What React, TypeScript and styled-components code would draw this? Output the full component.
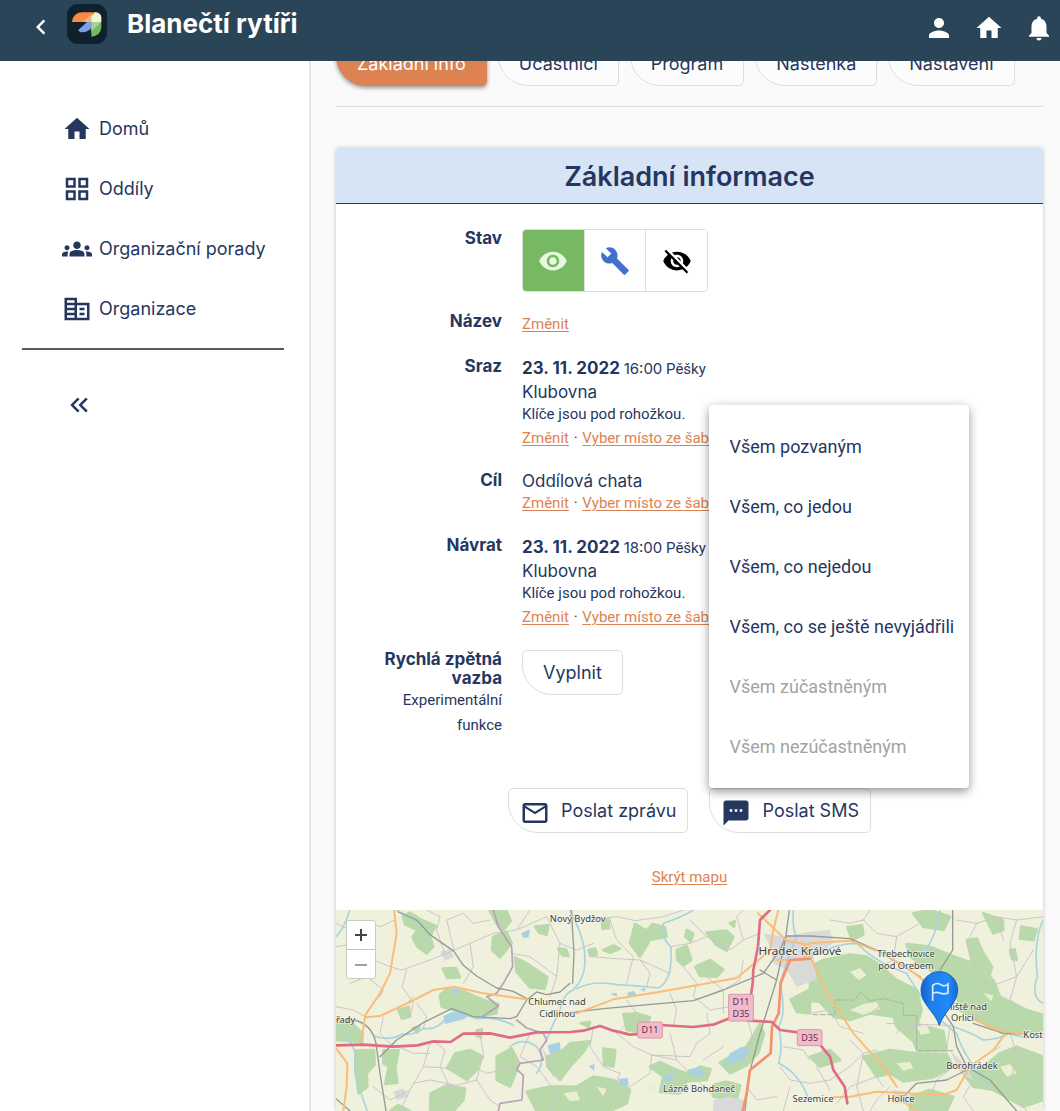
import React from "react";
import styled, { createGlobalStyle, css } from "styled-components";
import {
  MdBuild,
  MdChevronLeft,
  MdCorporateFare,
  MdGridView,
  MdGroups,
  MdHome,
  MdKeyboardDoubleArrowLeft,
  MdMailOutline,
  MdNotifications,
  MdPerson,
  MdSms,
  MdVisibility,
  MdVisibilityOff,
} from "react-icons/md";

const ink = "#26375f";
const orange = "#dd8251";
const line = "#dedede";
const display = `Inter, "Liberation Sans", sans-serif`;
const body = `Roboto, "Liberation Sans", sans-serif`;

const GlobalStyle = createGlobalStyle`
  * { box-sizing: border-box; }
  body { margin: 0; background: #fafafa; color: ${ink}; font-family: ${body}; font-size: 15px; }
  button { font: inherit; color: inherit; cursor: pointer; }
`;

/* ---------- Shell ---------- */

const Shell = styled.div`
  display: grid;
  grid-template-columns: 311px minmax(0, 1fr);
  min-height: 100vh;
`;

const AppBar = styled.header`
  position: fixed;
  inset: 0 0 auto 0;
  z-index: 10;
  display: flex;
  justify-content: space-between;
  align-items: flex-start;
  height: 61px;
  padding: 0 6px 0 26px;
  background: #294557;
  color: #fff;
`;

const Brand = styled.div`
  display: flex;
  align-items: center;
  height: 48px;
`;

const AppTitle = styled.h1`
  margin: 0 0 0 20px;
  font: 700 26px/32px ${display};
`;

const BarActions = styled.div`
  display: flex;
  align-items: center;
  gap: 20px;
  height: 56px;
`;

const IconButton = styled.button`
  display: flex;
  padding: 0;
  border: 0;
  background: none;
`;

const BackButton = styled(IconButton)`
  margin-right: 11px;
  padding-top: 6px;
`;

const Sidebar = styled.aside`
  padding: 99px 25px 0 22px;
  background: #fff;
  border-right: 2px solid #e6e6e6;
`;

const NavList = styled.nav`
  display: flex;
  flex-direction: column;
  padding-bottom: 9px;
  border-bottom: 2px solid #5b5b5b;
`;

const NavLink = styled.a`
  display: flex;
  align-items: center;
  gap: 7px;
  height: 60px;
  padding-left: 40px;
  color: ${ink};
  font: 400 18px/24px ${display};
  text-decoration: none;
`;

const CollapseButton = styled(IconButton)`
  margin: 40px 0 0 42px;
`;

const Main = styled.main`
  display: flex;
  flex-direction: column;
  padding: 41px 17px 0 25px;
`;

/* ---------- Tabs and buttons ---------- */

const leaf = css`
  display: inline-flex;
  align-items: center;
  justify-content: center;
  height: 45px;
  border: 1px solid ${line};
  border-radius: 5px 5px 5px 30px;
  background: #fff;
  font: 400 18px/24px ${display};
  white-space: nowrap;
`;

const Tabs = styled.nav`
  display: flex;
  gap: 11px;
  padding-bottom: 20px;
  border-bottom: 1px solid ${line};
`;

const Tab = styled.button<{ $active?: boolean }>`
  ${leaf}
  padding: 0 20px;
  background: #fcfcfc;
  ${(p) =>
    p.$active &&
    css`
      border-color: ${orange};
      background: ${orange};
      color: #fff;
      box-shadow: 0 2px 4px rgba(0, 0, 0, 0.4);
    `}
`;

const LeafButton = styled.button`
  ${leaf}
  padding: 0 20px;
`;

const ActionButton = styled.button`
  ${leaf}
  gap: 11px;
  padding: 0 11px;

  svg {
    margin-top: 5px;
  }
`;

/* ---------- Card ---------- */

const Card = styled.section`
  display: flex;
  flex: 1;
  flex-direction: column;
  margin-top: 41px;
  border-radius: 3px 3px 0 0;
  background: #fff;
  box-shadow: 0 0 4px rgba(0, 0, 0, 0.22);
`;

const CardTitle = styled.h2`
  margin: 0;
  padding: 12px 0 9px;
  border-bottom: 1px solid ${ink};
  border-radius: 3px 3px 0 0;
  background: #d7e4f6;
  font: 600 27px/34px ${display};
  text-align: center;
`;

const Details = styled.dl`
  display: grid;
  gap: 20px;
  margin: 0;
  padding: 25px 0 0;
`;

const Row = styled.div`
  display: grid;
  grid-template-columns: 166px minmax(0, 1fr);
  gap: 20px;
`;

const Label = styled.dt`
  padding-left: 40px;
  font: 700 17px/19px ${display};
  text-align: right;
`;

const Hint = styled.span`
  display: block;
  font: 400 15px/25px ${body};
`;

const Value = styled.dd`
  margin: 0;
`;

const Line = styled.div`
  line-height: 25px;
`;

const Place = styled.div`
  font: 400 17px/20px ${display};
`;

const Note = styled.div`
  line-height: 24px;
`;

const Day = styled.b`
  font: 700 17px/20px ${display};
`;

const Time = styled.time`
  font: 400 15px/20px ${display};
`;

const Link = styled.a`
  color: ${orange};
  text-decoration: underline;
  text-underline-offset: 2px;
`;

const Dot = styled.span`
  margin: 0 1px;
`;

const StateGroup = styled.div`
  display: inline-flex;
  width: 186px;
  height: 63px;
  border: 1px solid ${line};
  border-radius: 4px;
  overflow: hidden;
  vertical-align: top;
`;

const StateButton = styled.button<{ $color: string; $fill?: string }>`
  display: flex;
  flex: 1;
  align-items: center;
  justify-content: center;
  padding: 0;
  border: 0;
  background: ${(p) => p.$fill ?? "#fff"};
  color: ${(p) => p.$color};

  & + & {
    border-left: 1px solid ${line};
  }
`;

const Actions = styled.div`
  display: flex;
  justify-content: center;
  gap: 21px;
  margin-top: 50px;
`;

const MenuAnchor = styled.div`
  position: relative;
`;

const Menu = styled.div`
  position: absolute;
  bottom: 100%;
  left: 0;
  z-index: 5;
  display: flex;
  flex-direction: column;
  width: 260px;
  padding: 11px 0 12px;
  border-radius: 4px;
  background: #fff;
  box-shadow: 0 4px 8px rgba(0, 0, 0, 0.32), 0 1px 14px rgba(0, 0, 0, 0.12);
`;

const MenuItem = styled.button`
  height: 60px;
  padding: 0 20px;
  border: 0;
  background: none;
  font-size: 18px;
  text-align: left;
  white-space: nowrap;

  &:disabled {
    color: #a3a3a3;
    cursor: default;
  }
`;

const MapToggle = styled.div`
  padding: 32px 0 20px;
  line-height: 25px;
  text-align: center;
`;

/* ---------- Map ---------- */

const MapFrame = styled.div`
  position: relative;
  display: flex;
  flex: 1;
  min-height: 201px;
  overflow: hidden;
`;

const MapCanvas = styled.svg`
  flex: 1;
  min-width: 0;
  background: #f0f1dc;
`;

const ZoomBox = styled.div`
  position: absolute;
  top: 10px;
  left: 10px;
  display: flex;
  flex-direction: column;
  border: 1px solid #c9cdbf;
  border-radius: 3px;
  background: #fff;
`;

const ZoomButton = styled.button`
  display: flex;
  align-items: center;
  justify-content: center;
  width: 28px;
  height: 28px;
  padding: 0;
  border: 0;
  background: none;
  color: #444;

  & + & {
    border-top: 1px solid #c4c4c4;
    height: 29px;
  }
`;

const Logo = () => (
  <svg width="40" height="40" viewBox="202 12 120 120" aria-hidden="true">
    <rect x="202" y="12" width="120" height="120" rx="33" fill="#10212e" />
    <path d="M217 66Q220 37 250 37H290L275 66Z" fill="#f58b45" />
    <path d="M250 66 275 43V66Z" fill="#f7b27c" />
    <path d="M275 66V48L287 37A18 15 0 0 1 305 52V66Z" fill="#eef8d4" />
    <path d="M236 90 262 66H275V84Q262 98 248 97Q238 97 236 90Z" fill="#7c9fe0" />
    <path d="M275 66H305V82Q303 108 275 110Z" fill="#74b95f" />
    <path d="M275 66H305L275 95Z" fill="#a9cf92" />
  </svg>
);

const woods = [
  "M218 48 240 38 275 60 318 78 300 108 310 140 290 160 262 140 248 112 262 90 225 72Z",
  "M478 30H528L542 62 520 92 500 72Z",
  "M490 110 530 96 545 130 510 172 486 150Z",
  "M555 172 590 190 652 232 644 266 600 262 560 216Z",
  "M615 80 655 76 650 104 628 98Z",
  "M684 146 708 148 716 168 698 166Z",
  "M338 206 378 204 390 232 352 234Z",
  "M330 285 350 268 400 274 466 302 505 312 498 340 440 350 382 332 335 320Z",
  "M205 330 236 320 240 350 216 356Z",
  "M18 372 60 365 98 400 96 426 18 420Z",
  "M78 452 132 450 134 494 110 520 112 560 86 580 78 520Z",
  "M160 452 206 450 196 505 202 548 166 552 176 500 160 490Z",
  "M376 460 420 450 458 470 440 510 410 540 380 520 352 504Z",
  "M440 392 456 388 452 412 440 408Z",
  "M248 384 268 380 262 398Z",
  "M500 470 545 445 568 490 540 560 500 540Z",
  "M302 580 350 556 405 566 400 600 370 633H300Z",
  "M590 575 660 560 740 560 790 530 850 540 900 570 890 610 840 633H620Z",
  "M650 470 700 450 720 430 780 424 760 456 720 500 690 540 652 500Z",
  "M180 633 204 615 240 633Z",
  "M816 62 836 58 838 84 818 86Z",
  "M776 150 796 146 800 164 780 166Z",
  "M752 370 780 366 776 380Z",
  "M915 72 950 92 968 72 1005 82 1010 110 960 120 930 170 900 130Z",
  "M820 150 850 136 870 146 840 158Z",
  "M1130 98 1190 92 1210 110 1190 152 1160 136Z",
  "M1040 150 1070 138 1084 180 1060 196 1042 180Z",
  "M1096 200 1140 180 1180 208 1160 230 1110 228Z",
  "M1070 90 1090 100 1082 124 1066 110Z",
  "M1200 70 1214 64 1212 80Z",
  "M880 342 920 340 960 352 940 400 890 390Z",
  "M960 500 990 486 1040 510 1070 520 1110 500 1142 508 1130 540 1070 544 1050 580 990 576 1000 530Z",
  "M1170 488 1250 440 1290 372 1302 400 1286 456 1250 496 1200 520Z",
  "M1150 555 1190 545 1230 556 1220 600 1150 590Z",
  "M820 446 856 450 850 500 822 494Z",
  "M1382 298 1440 268 1440 340 1400 336Z",
  "M1440 200 1480 180 1560 164 1610 170 1650 196 1700 240 1760 270 1775 330 1762 372 1840 394 1850 452 1762 452 1750 424 1700 380 1690 350 1620 340 1560 360 1510 350 1470 306 1440 302Z",
  "M1730 132 1800 140 1868 168 1930 190 1990 240 2010 290 2090 330 2139 345V392L2020 400 1940 360 1890 330 1876 270 1800 210 1740 170Z",
  "M1910 120 1940 116 1960 160 1986 200 1975 240 1930 200Z",
  "M1960 40 2018 60 2020 90 1990 100Z",
  "M2074 80 2120 88 2110 120 2070 116Z",
  "M2040 150 2054 148 2060 180 2046 176Z",
  "M1552 82 1596 76 1600 104 1566 120Z",
  "M1750 40 1800 30 1860 50 1840 90 1780 80Z",
  "M1600 470 1680 450 1760 460 1850 462 1870 500 1810 532 1720 544 1680 520 1640 530Z",
  "M1900 520 1960 500 2010 460 2060 440 2139 470V600L2080 620 1990 570 1930 560Z",
  "M1440 470 1500 450 1530 480 1470 500Z",
  "M1740 590 1800 570 1870 590 1850 633H1740Z",
];

const clearings = [
  "M1560 215 1590 205 1610 226 1586 240Z",
  "M1560 330 1600 312 1640 306 1650 326 1600 344Z",
  "M1760 380 1790 372 1800 400 1772 404Z",
  "M940 560 970 552 980 580Z",
  "M1960 280 1990 286 1984 304Z",
  "M700 580 740 574 750 600 720 604Z",
  "M2010 500 2040 492 2060 520 2030 530Z",
  "M1700 490 1740 486 1750 504 1720 512Z",
  "M800 560 830 566 820 590Z",
];

const towns = [
  "M1300 100 1360 110 1440 95 1500 90 1510 130 1450 170 1460 240 1400 260 1370 210 1330 190 1320 140Z",
  "M1150 600 1200 590 1240 600 1240 633H1150Z",
  "M330 155 360 148 372 172 344 182Z",
  "M190 575 220 565 236 590 200 600Z",
  "M1860 450 1910 500 1930 540 1890 520Z",
  "M1690 570 1730 575 1740 612 1690 610Z",
];

const lakes = [
  "M340 348 372 334 410 340 406 356 360 368 344 372Z",
  "M652 436 690 426 692 454 660 462Z",
  "M574 100 600 88 596 112 580 114Z",
  "M364 264 388 266 392 284 372 280Z",
  "M866 536 894 534 896 560 868 556Z",
  "M1180 500 1200 460 1236 440 1260 450 1240 484 1200 490Z",
  "M1070 510 1110 500 1124 526 1086 528Z",
  "M1000 530 1030 516 1030 540 1004 544Z",
  "M776 498 794 492 792 514Z",
  "M890 280 910 272 920 284 896 290Z",
  "M840 282 860 278 862 290Z",
  "M930 268 946 264 944 276Z",
];

const rivers = [
  "M60 30Q40 90 18 110",
  "M18 378Q60 410 76 460Q70 520 86 560L112 633",
  "M132 408Q180 425 216 402 250 408 280 385 320 392 346 356 400 338 440 356 500 348 550 376 600 392",
  "M200 30Q250 60 290 84 300 120 280 120",
  "M720 30Q766 120 764 170 770 230 730 270 700 280 690 330 660 390 646 430",
  "M740 266Q790 240 860 254 930 258 985 264 1030 240 1022 140 990 110 1000 70 1060 50 1090 30",
  "M1390 30Q1386 90 1400 110 1370 180 1350 250 1370 340 1346 380 1360 440 1346 490 1410 520 1436 600",
  "M1440 170Q1520 130 1580 130 1640 190 1730 220 1760 270 1800 330 1840 370 1880 400 1900 470 1980 560 2040 633",
  "M1830 30Q1820 110 1780 160",
  "M2139 60Q2110 120 2122 230 2100 290 2139 310",
  "M1870 380Q1930 400 1960 420 2000 420 2040 400 2080 420 2139 410",
  "M540 440Q580 410 620 440 650 480 620 520",
];

const lanes = [
  "M18 70 60 90 100 60 150 80 195 60M18 140 90 130 130 180 180 200 215 210 300 180 345 162",
  "M60 250 110 230 160 270 150 290M230 210 216 260 250 310 240 350M250 290 230 310M345 162 320 90 330 50 290 30",
  "M345 162 420 130 490 100 560 90 650 50M372 150 350 60 400 40 430 70 480 60M420 130 430 200 400 250",
  "M545 160 600 170 680 230 660 290M650 50 690 130 680 230M560 90 600 30M690 130 740 150 790 130",
  "M18 320 70 330 105 350M160 350 150 400 180 430M280 385 290 350 260 310M300 430 280 500 240 570 210 633",
  "M320 430 345 450 330 500 360 560 340 633M280 500 350 504 410 490 470 520 560 500",
  "M180 430 250 460 300 460M240 570 180 600 130 560M450 400 460 460 440 540 480 600 510 620",
  "M440 540 380 556 300 540 250 550M600 400 570 470 620 500 680 580 660 633M640 450 670 530",
  "M780 60 860 50 915 62 1000 50 1060 30M840 60 860 120 910 170 890 250M780 170 860 176 930 180 1020 220",
  "M1022 140 1080 130 1130 110 1200 150 1240 120 1290 100M1080 60 1130 110M1240 120 1220 50 1240 30",
  "M1060 200 1100 250 1090 290M1130 230 1180 270 1180 340M1020 280 1040 330 1030 380M890 300 920 340 860 400",
  "M860 400 910 440 965 465 1080 470 1100 430 1140 400M965 465 960 520 900 560 860 600M965 465 1040 480 1100 540 1150 590",
  "M790 380 780 440 820 500 870 520M870 520 850 570 800 600M1040 480 1020 400M1140 400 1130 340M1180 440 1120 480",
  "M1090 290 1140 330 1200 320M930 180 960 220 950 260M1240 180 1230 240 1180 270M1250 350 1270 420 1230 470",
  "M1440 340 1500 330 1530 380 1600 400M1500 540 1560 500 1600 460 1640 450M1520 610 1560 560 1640 530 1660 560",
  "M1600 60 1640 100 1700 110 1770 70 1830 80M1700 110 1690 180 1670 190 1665 240M1500 60 1560 70 1600 60 1620 30",
  "M1880 60 1940 70 2000 50 2060 60 2139 50M1940 70 1910 130 1940 210 1980 260 2060 230 2110 150",
  "M2060 60 2040 130 2060 230 2040 300 2080 330M2000 50 2020 120M1680 250 1660 310 1620 340",
  "M1670 370 1860 376 1870 380M1720 370 1700 400M1860 380 1850 450M1870 500 1820 540 1790 620",
  "M1930 540 1900 590 1930 633M2040 400 2060 460 2120 500 2139 560M2010 440 1960 470M2060 460 2040 560 2090 633",
  "M1350 500 1380 540 1440 550 1500 540M1360 440 1420 450 1440 480M1380 560 1360 633M1250 560 1280 600 1340 590",
  "M1480 440 1460 500 1500 570M1560 420 1600 460 1580 560 1600 633M1680 560 1640 600 1620 633",
];

const borders = [
  "M490 30 505 80 545 140 548 200 520 250 500 280 470 290 505 318 460 348",
  "M560 360 590 384 640 400 650 420 630 450 640 480 570 490 560 508 580 526 576 600 510 610 505 633",
];

const rails = [
  "M205 36 260 60 300 104 372 154 400 196 440 228 500 264 550 274 590 296",
  "M18 360H70Q125 370 138 430L150 520 168 633",
  "M150 470 200 420 280 368 365 326 430 350 540 356 560 350 590 300 620 276 650 284 690 276 720 250",
  "M720 338 820 326 1090 302 1180 270 1300 220 1350 150 1368 108H1440L1560 116 1640 150",
  "M1378 30 1366 120 1340 240 1290 400 1258 520 1245 633",
  "M1290 210 1340 240M18 596 60 633M724 30 732 160 728 250",
  "M1868 30V150L1830 210M1640 150 1770 230 1870 380 1880 440 1910 500 1980 540 2060 633",
  "M1910 510 1850 540 1760 550 1720 590M1930 370 2020 400 2080 402",
];

const primary = [
  "M192 30 200 100 180 220 150 280 106 345 92 436",
  "M106 352 150 348 240 306 310 270 372 260 460 280 590 298",
  "M18 445 52 490 50 560 40 633",
  "M740 340 850 298 1000 274 1220 234 1290 176 1320 150 1330 90 1345 30",
  "M1284 40 1370 122 1440 134 1420 180 1340 180M1370 122 1420 132 1450 190 1480 260 1570 400 1660 500 1700 560",
  "M1440 130 1560 122 1660 160 1740 210 1780 240",
  "M1930 356 2000 390 2080 402M2024 404 1990 450 1920 500 1880 570 1840 584 1730 580 1640 575 1560 590 1510 592",
  "M1700 590 1760 633",
];

const motorways = [
  "M18 436 100 434 190 440 262 436 310 424 362 426 400 401 480 400 540 413 620 397 720 396 760 392 810 378 850 392 900 404 940 402",
  "M990 375 1090 381 1150 374 1210 350 1260 362 1325 366 1350 390 1410 398 1470 434 1500 470 1510 510 1544 560 1552 610",
  "M1320 30 1290 60 1284 140 1270 210 1268 250 1262 290",
];

const places: [number, number, number, string][] = [
  [743, 66, 28, "Nový Bydžov"],
  [681, 314, 28, "Chlumec nad"],
  [682, 350, 28, "Cidlinou"],
  [47, 368, 28, "řady"],
  [1410, 166, 35, "Hradec Králové"],
  [1728, 172, 28, "Třebechovice"],
  [1728, 207, 28, "pod Orebem"],
  [1896, 329, 28, "Týniště nad"],
  [1897, 362, 28, "Orlicí"],
  [2109, 413, 28, "Kost"],
  [1926, 508, 28, "Borohrádek"],
  [1713, 605, 28, "Holice"],
  [1107, 575, 28, "Lázně Bohdaneč"],
  [1449, 606, 28, "Sezemice"],
];

const shields: [number, number, string[]][] = [
  [960, 390, ["D11"]],
  [1233, 323, ["D11", "D35"]],
  [1439, 413, ["D35"]],
];

const RegionMap = () => (
  <MapCanvas viewBox="18 30 2121 603" preserveAspectRatio="xMidYMid slice" role="img" aria-label="Mapa">
    <defs>
      <linearGradient id="pin" x1="0" x2="1">
        <stop offset="0" stopColor="#1261c9" />
        <stop offset="0.25" stopColor="#1f7eea" />
        <stop offset="0.75" stopColor="#2189fa" />
        <stop offset="1" stopColor="#1668d0" />
      </linearGradient>
    </defs>
    <g fill="#b9d9aa" stroke="#b9d9aa" strokeWidth="8" strokeLinejoin="round">
      {woods.map((d) => <path key={d} d={d} />)}
    </g>
    <g fill="#eaefd3">{clearings.map((d) => <path key={d} d={d} />)}</g>
    <g fill="#dad9d9">{towns.map((d) => <path key={d} d={d} />)}</g>
    <g fill="#a8d1e2">{lakes.map((d) => <path key={d} d={d} />)}</g>
    <g fill="none" strokeLinejoin="round" strokeLinecap="round">
      <g stroke="#a9d3df" strokeWidth="5">{rivers.map((d) => <path key={d} d={d} />)}</g>
      <g stroke="#cbc5cc" strokeWidth="3">{lanes.map((d) => <path key={d} d={d} />)}</g>
      <g stroke="#b9a0b9" strokeWidth="5">{borders.map((d) => <path key={d} d={d} />)}</g>
      <path d="M1448 344H1515V300H1575L1590 276 1620 302 1660 296 1720 310V346H1760V452H1870" stroke="#a7b5a2" strokeWidth="3" strokeDasharray="16 6" />
      <g stroke="#969994" strokeWidth="4">{rails.map((d) => <path key={d} d={d} />)}</g>
      <g stroke="#f9bd78" strokeWidth="6">{primary.map((d) => <path key={d} d={d} />)}</g>
      <path d="M1440 176 1380 180 1352 250 1346 340 1326 380 1322 460 1260 510 1250 580 1238 633" stroke="#f4926f" strokeWidth="8" />
      <g stroke="#df6c84" strokeWidth="8">{motorways.map((d) => <path key={d} d={d} />)}</g>
    </g>
    <g fontFamily='"Noto Sans", "Open Sans", sans-serif' textAnchor="middle">
      {places.map(([x, y, size, name]) => (
        <text key={name} x={x} y={y} fontSize={size} fill="#3d3d3d" stroke="#f7f8ee" strokeWidth="5" strokeOpacity="0.75" paintOrder="stroke">
          {name}
        </text>
      ))}
      {shields.map(([x, y, names]) => (
        <g key={x} fontSize="27" fill="#6b2a48">
          <rect x={x - 37} y={y - 8 - names.length * 16} width="74" height={16 + names.length * 32} rx="5" fill="#f0bccb" stroke="#dc93a8" strokeWidth="3" />
          {names.map((n, i) => (
            <text key={n} x={x} y={y + 10 + (i * 2 - names.length + 1) * 17}>{n}</text>
          ))}
        </g>
      ))}
    </g>
    <path d="M1828 376C1815 335 1773 310 1773 270A55 55 0 0 1 1883 270C1883 310 1841 335 1828 376Z" fill="url(#pin)" stroke="#1560bd" strokeWidth="3" />
    <path d="M1808 302V256Q1820 246 1832 254T1854 252V279Q1842 284 1830 279T1808 281" fill="none" stroke="#d7ecff" strokeWidth="5" />
  </MapCanvas>
);

/* ---------- Page ---------- */

const navItems = [
  { icon: MdHome, text: "Domů" },
  { icon: MdGridView, text: "Oddíly" },
  { icon: MdGroups, text: "Organizační porady" },
  { icon: MdCorporateFare, text: "Organizace" },
];

const tabs = ["Základní info", "Účastníci", "Program", "Nástěnka", "Nastavení"];

const recipients = [
  { text: "Všem pozvaným" },
  { text: "Všem, co jedou" },
  { text: "Všem, co nejedou" },
  { text: "Všem, co se ještě nevyjádřili" },
  { text: "Všem zúčastněným", disabled: true },
  { text: "Všem nezúčastněným", disabled: true },
];

const PlaceLinks = () => (
  <Line>
    <Link href="#zmenit">Změnit</Link> <Dot>·</Dot> <Link href="#sablona">Vyber místo ze šablony</Link>
  </Line>
);

const Meeting = ({ label, time }: { label: string; time: string }) => (
  <Row>
    <Label>{label}</Label>
    <Value>
      <Line>
        <Day>23. 11. 2022</Day> <Time>{time}</Time> Pěšky
      </Line>
      <Place>Klubovna</Place>
      <Note>Klíče jsou pod rohožkou.</Note>
      <PlaceLinks />
    </Value>
  </Row>
);

export default function App() {
  return (
    <>
      <GlobalStyle />
      <AppBar>
        <Brand>
          <BackButton aria-label="Zpět"><MdChevronLeft size={30} /></BackButton>
          <Logo />
          <AppTitle>Blanečtí rytíři</AppTitle>
        </Brand>
        <BarActions>
          <IconButton aria-label="Profil"><MdPerson size={30} /></IconButton>
          <IconButton aria-label="Domů"><MdHome size={30} /></IconButton>
          <IconButton aria-label="Upozornění"><MdNotifications size={30} /></IconButton>
        </BarActions>
      </AppBar>
      <Shell>
        <Sidebar>
          <NavList>
            {navItems.map(({ icon: Icon, text }) => (
              <NavLink key={text} href="#nav"><Icon size={30} />{text}</NavLink>
            ))}
          </NavList>
          <CollapseButton aria-label="Sbalit"><MdKeyboardDoubleArrowLeft size={30} /></CollapseButton>
        </Sidebar>
        <Main>
          <Tabs>
            {tabs.map((t, i) => <Tab key={t} $active={i === 0}>{t}</Tab>)}
          </Tabs>
          <Card>
            <CardTitle>Základní informace</CardTitle>
            <Details>
              <Row>
                <Label>Stav</Label>
                <Value>
                  <StateGroup>
                    <StateButton aria-label="Viditelné" aria-pressed $color="#e6fae0" $fill="#76b962"><MdVisibility size={30} /></StateButton>
                    <StateButton aria-label="V přípravě" $color="#4470cc"><MdBuild size={30} /></StateButton>
                    <StateButton aria-label="Skryté" $color="#000"><MdVisibilityOff size={30} /></StateButton>
                  </StateGroup>
                </Value>
              </Row>
              <Row>
                <Label>Název</Label>
                <Value><Line><Link href="#nazev">Změnit</Link></Line></Value>
              </Row>
              <Meeting label="Sraz" time="16:00" />
              <Row>
                <Label>Cíl</Label>
                <Value>
                  <Place>Oddílová chata</Place>
                  <PlaceLinks />
                </Value>
              </Row>
              <Meeting label="Návrat" time="18:00" />
              <Row>
                <Label>Rychlá zpětná vazba<Hint>Experimentální funkce</Hint></Label>
                <Value><LeafButton>Vyplnit</LeafButton></Value>
              </Row>
            </Details>
            <Actions>
              <ActionButton><MdMailOutline size={30} />Poslat zprávu</ActionButton>
              <MenuAnchor>
                <ActionButton aria-expanded><MdSms size={30} />Poslat SMS</ActionButton>
                <Menu>
                  {recipients.map((r) => (
                    <MenuItem key={r.text} disabled={r.disabled}>{r.text}</MenuItem>
                  ))}
                </Menu>
              </MenuAnchor>
            </Actions>
            <MapToggle><Link href="#mapa">Skrýt mapu</Link></MapToggle>
            <MapFrame>
              <RegionMap />
              <ZoomBox>
                <ZoomButton aria-label="Přiblížit">
                  <svg width="14" height="14" stroke="#444" strokeWidth="2"><path d="M1 7H13M7 1V13" /></svg>
                </ZoomButton>
                <ZoomButton aria-label="Oddálit">
                  <svg width="14" height="14" stroke="#444" strokeWidth="1"><path d="M1 8H13" /></svg>
                </ZoomButton>
              </ZoomBox>
            </MapFrame>
          </Card>
        </Main>
      </Shell>
    </>
  );
}
